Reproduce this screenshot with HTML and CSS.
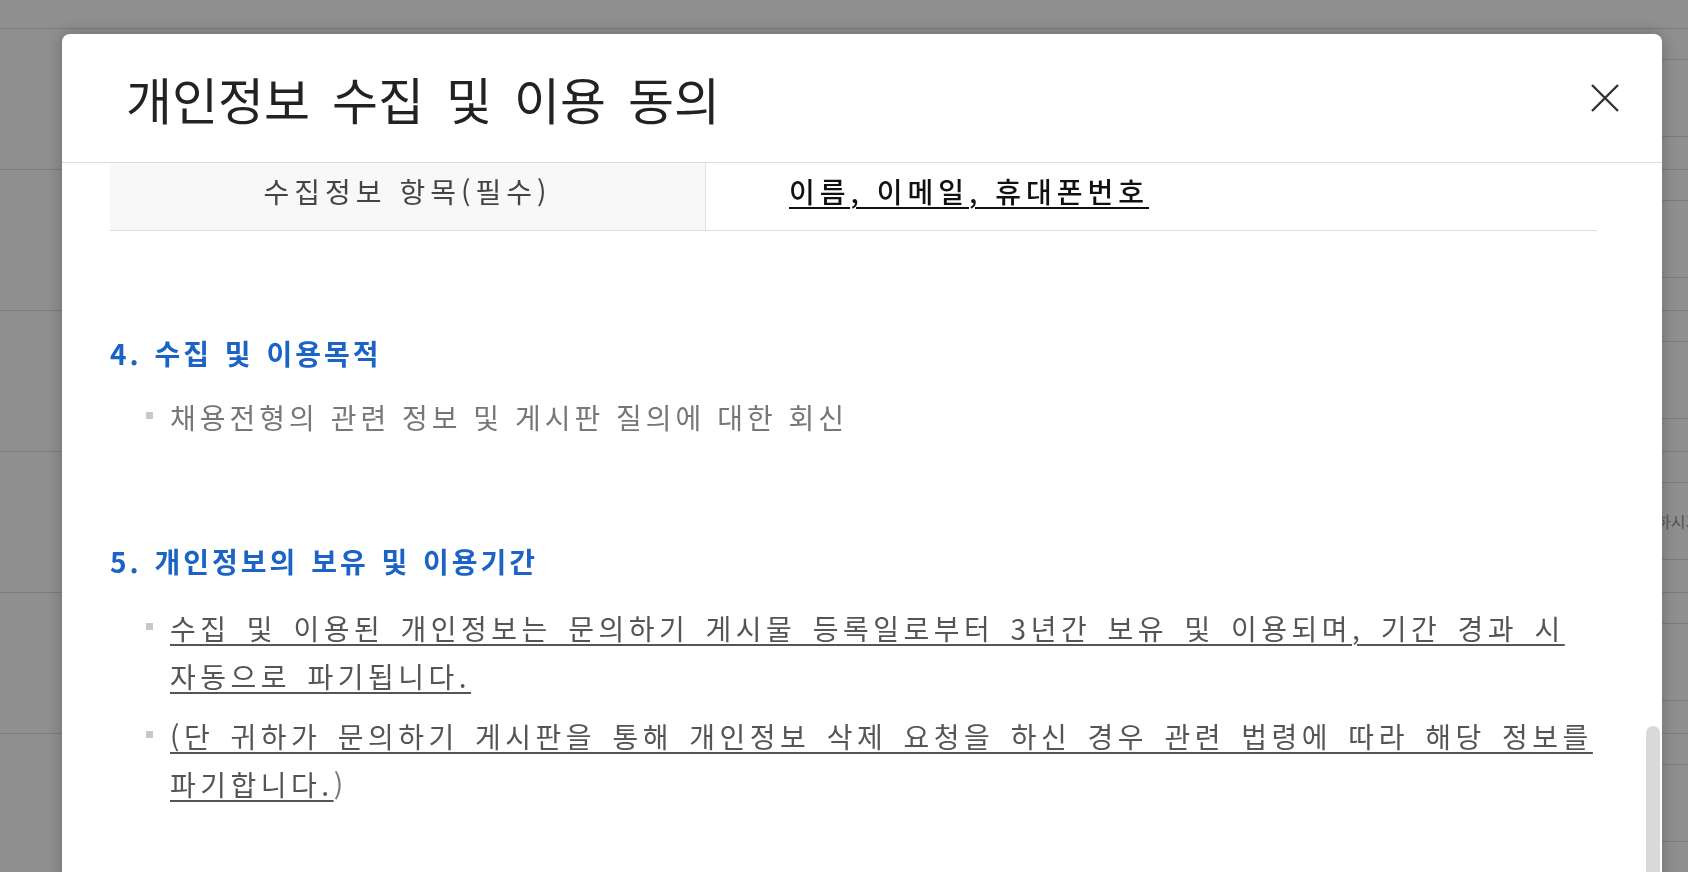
FILE: index.html
```html
<!DOCTYPE html>
<html lang="ko">
<head>
  <meta charset="UTF-8">
  <meta name="viewport" content="width=device-width, initial-scale=1.0">
  <title>개인정보 수집 및 이용 동의</title>
  <link rel="stylesheet" href="styles.css">
</head>
<body>
  <div class="page">
    <div class="topbar"></div>
    <div class="row"><div class="field"></div></div>
    <div class="row"><div class="field"></div></div>
    <div class="row"><div class="field"></div></div>
    <div class="row"><div class="field">내용을 입력하시기 바랍니다.</div></div>
    <div class="row"><div class="field"></div></div>
    <div class="row"><div class="field"></div></div>
  </div>

  <div class="dim"></div>

  <div class="modal">
    <div class="modal-header">
      <h2 class="modal-title">개인정보 수집 및 이용 동의</h2>
      <button class="close" type="button" aria-label="닫기">
        <svg width="30" height="30" viewBox="0 0 30 30">
          <path d="M2 2 L28 28 M28 2 L2 28" stroke="#333" stroke-width="2.4" fill="none"/>
        </svg>
      </button>
    </div>

    <div class="modal-body">
      <div class="content">
        <div class="info-row">
          <div class="info-label">수집정보 항목(필수)</div>
          <div class="info-value"><u>이름, 이메일, 휴대폰번호</u></div>
        </div>

        <div class="section">
          <h3>4. 수집 및 이용목적</h3>
          <ul class="bullets">
            <li>채용전형의 관련 정보 및 게시판 질의에 대한 회신</li>
          </ul>
        </div>

        <div class="section">
          <h3>5. 개인정보의 보유 및 이용기간</h3>
          <ul class="bullets">
            <li><u>수집 및 이용된 개인정보는 문의하기 게시물 등록일로부터 3년간 보유 및 이용되며, 기간 경과 시<br>자동으로 파기됩니다.</u></li>
            <li><u>(단 귀하가 문의하기 게시판을 통해 개인정보 삭제 요청을 하신 경우 관련 법령에 따라 해당 정보를<br>파기합니다.</u>)</li>
          </ul>
        </div>
      </div>
      <div class="scrollbar"><div class="thumb"></div></div>
    </div>
  </div>
</body>
</html>
```

FILE: styles.css
```css
* {
  box-sizing: border-box;
}

body {
  margin: 0;
  height: 100vh;
  overflow: hidden;
  background: #fff;
  font-family: "Noto Sans CJK KR", "Noto Sans", sans-serif;
}

/* page behind the dialog */
.topbar {
  height: 29px;
  border-bottom: 1px solid #dcdcdc;
}

.row {
  height: 141px;
  padding-top: 30px;
  border-bottom: 1px solid #dcdcdc;
}

.field {
  height: 78px;
  margin-left: 1300px;
  padding-left: 278px;
  display: flex;
  align-items: center;
  border-top: 1px solid #dcdcdc;
  border-bottom: 1px solid #dcdcdc;
  font-size: 16px;
  color: #999;
  white-space: nowrap;
}

.dim {
  position: fixed;
  inset: 0;
  background: rgba(0, 0, 0, 0.44);
}

/* dialog */
.modal {
  position: fixed;
  left: 62px;
  top: 34px;
  width: 1600px;
  height: 900px;
  background: #fff;
  border-radius: 8px;
  box-shadow: 0 0 18px rgba(0, 0, 0, 0.25);
  display: flex;
  flex-direction: column;
  overflow: hidden;
}

.modal-header {
  flex-shrink: 0;
  height: 129px;
  padding: 0 42px 0 64px;
  display: flex;
  align-items: center;
  justify-content: space-between;
  border-bottom: 1px solid #ddd;
}

.modal-title {
  margin: 0;
  font-size: 50px;
  font-weight: 400;
  line-height: 1.2;
  color: #222;
  word-spacing: 8px;
}

.close {
  padding: 0;
  border: none;
  background: none;
  cursor: pointer;
  display: flex;
}

.modal-body {
  flex: 1;
  display: flex;
  overflow: hidden;
}

.content {
  flex: 1;
  padding: 0 49px 0 48px;
}

.scrollbar {
  width: 14px;
  margin-right: 2px;
  padding-top: 563px;
}

.thumb {
  height: 240px;
  background: #d9d9d9;
  border-radius: 7px 7px 0 0;
}

/* collected items row */
.info-row {
  display: grid;
  grid-template-columns: 596px 1fr;
  height: 68px;
  border-bottom: 1px solid #ddd;
  font-size: 28px;
  line-height: 36px;
  letter-spacing: 5px;
}

.info-label {
  padding-top: 10px;
  background: #f8f8f8;
  border-right: 1px solid #e2e2e2;
  text-align: center;
  color: #444;
}

.info-value {
  padding: 10px 0 0 83px;
  color: #111;
  font-weight: 500;
}

.info-value u {
  text-decoration-thickness: 2px;
  text-underline-offset: 4px;
}

/* sections */
.section h3 {
  margin: 104px 0 0;
  font-size: 28px;
  line-height: 36px;
  font-weight: 700;
  letter-spacing: 3px;
  word-spacing: 2px;
  color: #1b63c6;
}

.section + .section h3 {
  margin-top: 102px;
}

.bullets {
  list-style: none;
  margin: 22px -40px 0 0;
  padding: 0 0 0 60px;
}

.section + .section .bullets {
  margin-top: 25px;
}

.bullets li {
  position: relative;
  font-size: 28px;
  line-height: 48px;
  letter-spacing: 4px;
  color: #777;
}

.bullets li + li {
  margin-top: 12px;
}

.bullets li::before {
  content: "";
  position: absolute;
  left: -24px;
  top: 19px;
  width: 7px;
  height: 7px;
  background: #c8c8c8;
}

.bullets u {
  color: #555;
  letter-spacing: 4.5px;
  word-spacing: 4px;
  text-decoration-thickness: 2px;
  text-underline-offset: 4px;
}
```
